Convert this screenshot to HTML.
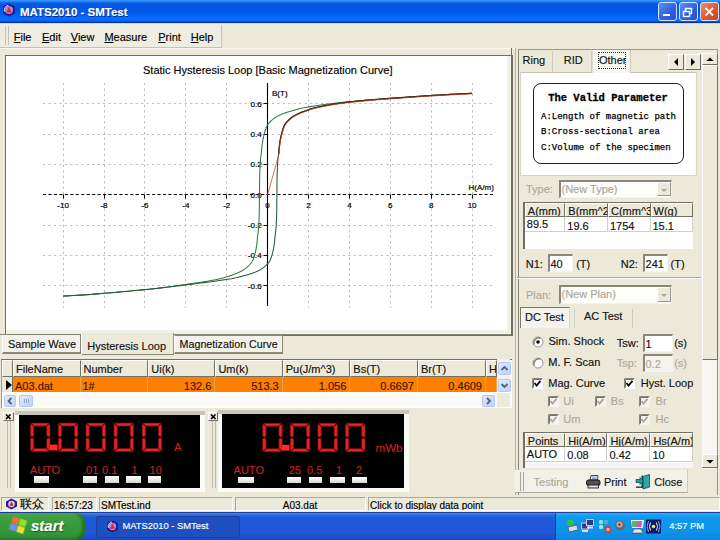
<!DOCTYPE html>
<html><head><meta charset="utf-8"><style>
html,body{margin:0;padding:0;width:720px;height:540px;overflow:hidden;background:#ECE9D8;font-family:'Liberation Sans', sans-serif;}
u{text-decoration:underline;}
div{-webkit-text-stroke:0.15px currentColor;}
</style></head><body>
<div style="position:absolute;left:0px;top:0px;width:720px;height:23px;background:linear-gradient(#3d9bff 0px,#2a80f8 1.5px,#0860e4 3px,#0055e2 6px,#0057e8 12px,#0061f8 15px,#086cff 18px,#0868f8 21px,#0040b8 22px,#0030a0 23px);"></div><svg style="position:absolute;left:2px;top:3px" width="14" height="14" viewBox="0 0 14 14"><path d="M7,0.6 L12.8,3.6 L12.8,10.4 L7,13.4 L1.2,10.4 L1.2,3.6Z" fill="#1a1890"/><circle cx="7" cy="7" r="4" fill="#b888d8"/><path d="M7,3.8 L9.8,9.4 L4.2,9.4Z" fill="#e02828"/><path d="M2.6,8.5 A4.8,4.8 0 0 1 6.5,2.2" fill="none" stroke="#e0e8ff" stroke-width="1"/></svg><div style="position:absolute;left:20px;top:5.5px;font-size:11.5px;line-height:13.5px;color:#fff;white-space:nowrap;font-weight:bold;text-shadow:1px 1px 0 #0a2a8a;">MATS2010 - SMTest</div><div style="position:absolute;left:658px;top:2px;width:19px;height:19px;box-sizing:border-box;border:1px solid #d8e4fc;border-radius:3px;background:linear-gradient(135deg,#5a90f4,#2a5fe0 60%,#2256d6);"><div style="position:absolute;left:3.5px;top:10.5px;width:7px;height:2.5px;background:#fff"></div></div><div style="position:absolute;left:679px;top:2px;width:19px;height:19px;box-sizing:border-box;border:1px solid #d8e4fc;border-radius:3px;background:linear-gradient(135deg,#5a90f4,#2a5fe0 60%,#2256d6);"><svg width="17" height="17" style="position:absolute;left:0;top:0"><path d="M5.5,8 V5.5 H11.5 V10.5 H9.5" fill="none" stroke="#fff" stroke-width="1.4"/><rect x="3.5" y="8.5" width="6" height="5" fill="none" stroke="#fff" stroke-width="1.4"/></svg></div><div style="position:absolute;left:700px;top:2px;width:19px;height:19px;box-sizing:border-box;border:1px solid #d8e4fc;border-radius:3px;background:linear-gradient(135deg,#f09070,#e05530 55%,#c84420);"><svg width="17" height="17" style="position:absolute;left:0;top:0"><path d="M4.5,5 L12,12.5 M12,5 L4.5,12.5" stroke="#fff" stroke-width="1.8"/></svg></div><div style="position:absolute;left:0px;top:23px;width:720px;height:25px;background:#ECE9D8;"></div><div style="position:absolute;left:0px;top:23px;width:720px;height:1px;background:#d0d6f0;"></div><div style="position:absolute;left:0px;top:24px;width:222px;height:23px;background:#efede2;"></div><div style="position:absolute;left:0px;top:47px;width:222px;height:1px;background:#c5c2b2;"></div><div style="position:absolute;left:0px;top:48px;width:720px;height:1px;background:#fbfaf4;"></div><div style="position:absolute;left:5px;top:26px;width:1px;height:19px;background:#c5c2b2;"></div><div style="position:absolute;left:8px;top:26px;width:1px;height:19px;background:#c5c2b2;"></div><div style="position:absolute;left:221px;top:25px;width:1px;height:22px;background:#c5c2b2;"></div><div style="position:absolute;left:13.75px;top:30.5px;font-size:11px;line-height:13px;color:#000;white-space:nowrap;"><u>F</u>ile</div><div style="position:absolute;left:42px;top:30.5px;font-size:11px;line-height:13px;color:#000;white-space:nowrap;"><u>E</u>dit</div><div style="position:absolute;left:70.75px;top:30.5px;font-size:11px;line-height:13px;color:#000;white-space:nowrap;"><u>V</u>iew</div><div style="position:absolute;left:104.4px;top:30.5px;font-size:11px;line-height:13px;color:#000;white-space:nowrap;"><u>M</u>easure</div><div style="position:absolute;left:158.2px;top:30.5px;font-size:11px;line-height:13px;color:#000;white-space:nowrap;"><u>P</u>rint</div><div style="position:absolute;left:190.7px;top:30.5px;font-size:11px;line-height:13px;color:#000;white-space:nowrap;"><u>H</u>elp</div><div style="position:absolute;left:5px;top:55px;width:508px;height:281px;background:#f2f1e8;box-sizing:border-box;border-left:1px solid #716f64;border-top:1px solid #716f64;border-right:1px solid #716f64;border-bottom:1px solid #716f64;"></div><div style="position:absolute;left:6px;top:56px;width:501px;height:274px;background:#fff;"></div><div style="position:absolute;left:143px;top:64px;font-size:11px;line-height:13px;color:#000;white-space:nowrap;">Static Hysteresis Loop [Basic Magnetization Curve]</div><svg style="position:absolute;left:0;top:0" width="720" height="540"><g stroke="#bcbcbc" stroke-width="1" stroke-dasharray="2.2,3.25"><line x1="43" y1="103.5" x2="494" y2="103.5"/><line x1="43" y1="134.5" x2="494" y2="134.5"/><line x1="43" y1="164.5" x2="494" y2="164.5"/><line x1="43" y1="225.5" x2="494" y2="225.5"/><line x1="43" y1="255.5" x2="494" y2="255.5"/><line x1="43" y1="285.5" x2="494" y2="285.5"/><line x1="63.5" y1="83" x2="63.5" y2="308"/><line x1="104.5" y1="83" x2="104.5" y2="308"/><line x1="144.5" y1="83" x2="144.5" y2="308"/><line x1="185.5" y1="83" x2="185.5" y2="308"/><line x1="226.5" y1="83" x2="226.5" y2="308"/><line x1="308.5" y1="83" x2="308.5" y2="308"/><line x1="349.5" y1="83" x2="349.5" y2="308"/><line x1="390.5" y1="83" x2="390.5" y2="308"/><line x1="431.5" y1="83" x2="431.5" y2="308"/><line x1="472.5" y1="83" x2="472.5" y2="308"/></g><line x1="43" y1="194.5" x2="494" y2="194.5" stroke="#000" stroke-width="1.15" stroke-dasharray="3.2,2.25"/><line x1="267.5" y1="83" x2="267.5" y2="306" stroke="#000" stroke-width="1.1"/><g stroke="#000" stroke-width="1"><line x1="63.5" y1="194.5" x2="63.5" y2="198.5"/><line x1="104.5" y1="194.5" x2="104.5" y2="198.5"/><line x1="144.5" y1="194.5" x2="144.5" y2="198.5"/><line x1="185.5" y1="194.5" x2="185.5" y2="198.5"/><line x1="226.5" y1="194.5" x2="226.5" y2="198.5"/><line x1="308.5" y1="194.5" x2="308.5" y2="198.5"/><line x1="349.5" y1="194.5" x2="349.5" y2="198.5"/><line x1="390.5" y1="194.5" x2="390.5" y2="198.5"/><line x1="431.5" y1="194.5" x2="431.5" y2="198.5"/><line x1="472.5" y1="194.5" x2="472.5" y2="198.5"/><line x1="263.5" y1="103.5" x2="267.5" y2="103.5"/><line x1="263.5" y1="134.5" x2="267.5" y2="134.5"/><line x1="263.5" y1="164.5" x2="267.5" y2="164.5"/><line x1="263.5" y1="225.5" x2="267.5" y2="225.5"/><line x1="263.5" y1="255.5" x2="267.5" y2="255.5"/><line x1="263.5" y1="285.5" x2="267.5" y2="285.5"/></g><g font-family="Liberation Sans" font-size="8" fill="#000" stroke="#000" stroke-width="0.2"><text x="63.1" y="207.5" text-anchor="middle">-10</text><text x="104.0" y="207.5" text-anchor="middle">-8</text><text x="144.9" y="207.5" text-anchor="middle">-6</text><text x="185.8" y="207.5" text-anchor="middle">-4</text><text x="226.7" y="207.5" text-anchor="middle">-2</text><text x="267.6" y="207.5" text-anchor="middle">0</text><text x="308.5" y="207.5" text-anchor="middle">2</text><text x="349.4" y="207.5" text-anchor="middle">4</text><text x="390.3" y="207.5" text-anchor="middle">6</text><text x="431.2" y="207.5" text-anchor="middle">8</text><text x="472.1" y="207.5" text-anchor="middle">10</text><text x="261.6" y="106.8" text-anchor="end">0.6</text><text x="261.6" y="137.1" text-anchor="end">0.4</text><text x="261.6" y="167.4" text-anchor="end">0.2</text><text x="261.6" y="197.7" text-anchor="end">0.0</text><text x="261.6" y="228.0" text-anchor="end">-0.2</text><text x="261.6" y="258.3" text-anchor="end">-0.4</text><text x="261.6" y="288.6" text-anchor="end">-0.6</text><text x="272" y="96">B(T)</text><text x="468.5" y="190">H(A/m)</text></g><path d="M63.10,296.05 L66.54,295.89 L69.97,295.72 L73.41,295.53 L76.85,295.33 L80.28,295.12 L83.72,294.89 L87.16,294.65 L90.60,294.40 L94.03,294.14 L97.47,293.88 L100.91,293.60 L104.34,293.31 L107.78,293.02 L111.22,292.72 L114.65,292.42 L118.09,292.11 L121.53,291.80 L124.97,291.48 L128.40,291.16 L131.84,290.84 L135.28,290.51 L138.71,290.18 L142.15,289.86 L145.59,289.53 L149.02,289.18 L152.46,288.82 L155.90,288.43 L159.34,288.03 L162.77,287.61 L166.21,287.17 L169.65,286.73 L173.08,286.27 L176.52,285.80 L179.96,285.33 L183.39,284.85 L186.83,284.37 L190.27,283.87 L193.71,283.35 L197.14,282.83 L200.58,282.30 L204.02,281.76 L207.45,281.18 L210.89,280.57 L214.33,279.93 L217.76,279.27 L221.20,278.51 L224.64,277.54 L228.07,276.39 L231.51,275.25 L234.95,274.02 L236.93,273.22 L237.08,273.15 L237.23,273.09 L237.39,273.02 L237.54,272.96 L237.69,272.89 L237.85,272.82 L238.00,272.76 L238.16,272.69 L238.31,272.62 L238.39,272.58 L238.46,272.55 L238.62,272.48 L238.77,272.41 L238.92,272.34 L239.08,272.27 L239.23,272.19 L239.39,272.12 L239.54,272.05 L239.69,271.97 L239.85,271.90 L240.00,271.82 L240.15,271.75 L240.31,271.67 L240.46,271.59 L240.62,271.51 L240.77,271.43 L240.92,271.35 L241.08,271.27 L241.23,271.19 L241.38,271.11 L241.54,271.02 L241.69,270.94 L241.82,270.87 L241.85,270.86 L242.00,270.77 L242.15,270.68 L242.31,270.59 L242.46,270.51 L242.61,270.42 L242.77,270.33 L242.92,270.23 L243.08,270.14 L243.23,270.04 L243.38,269.95 L243.54,269.85 L243.69,269.75 L243.84,269.65 L244.00,269.55 L244.15,269.44 L244.31,269.33 L244.46,269.23 L244.61,269.12 L244.77,269.01 L244.92,268.90 L245.07,268.78 L245.23,268.67 L245.26,268.64 L245.38,268.55 L245.54,268.43 L245.69,268.31 L245.84,268.19 L246.00,268.06 L246.15,267.94 L246.30,267.81 L246.46,267.68 L246.61,267.55 L246.77,267.42 L246.92,267.28 L247.07,267.15 L247.23,267.01 L247.38,266.87 L247.53,266.73 L247.69,266.59 L247.84,266.44 L248.00,266.30 L248.15,266.15 L248.30,266.01 L248.46,265.86 L248.61,265.71 L248.70,265.63 L248.76,265.56 L248.92,265.40 L249.07,265.25 L249.23,265.09 L249.38,264.92 L249.53,264.75 L249.69,264.58 L249.84,264.40 L249.99,264.23 L250.15,264.05 L250.30,263.88 L250.46,263.70 L250.61,263.52 L250.76,263.34 L250.92,263.16 L251.07,262.97 L251.22,262.78 L251.38,262.59 L251.53,262.39 L251.69,262.18 L251.84,261.97 L251.99,261.75 L252.13,261.53 L252.15,261.50 L252.30,261.24 L252.45,260.95 L252.61,260.64 L252.76,260.31 L252.92,259.97 L253.07,259.60 L253.22,259.22 L253.38,258.81 L253.53,258.40 L253.68,257.96 L253.84,257.51 L253.99,257.05 L254.15,256.57 L254.30,256.07 L254.45,255.57 L254.61,255.05 L254.76,254.52 L254.91,253.98 L255.07,253.41 L255.22,252.82 L255.38,252.21 L255.53,251.55 L255.57,251.38 L255.68,250.87 L255.84,250.15 L255.99,249.38 L256.14,248.57 L256.30,247.71 L256.45,246.79 L256.61,245.82 L256.76,244.78 L256.91,243.47 L257.07,241.94 L257.22,240.27 L257.38,238.58 L257.53,236.96 L257.68,235.51 L257.84,234.32 L257.99,233.25 L258.14,232.14 L258.30,230.80 L258.45,229.24 L258.61,227.44 L258.76,225.29 L258.91,222.69 L259.01,220.84 L259.07,219.50 L259.22,214.72 L259.37,204.46 L259.53,187.35 L259.68,175.60 L259.84,170.48 L259.99,167.12 L260.14,164.46 L260.30,162.24 L260.45,160.39 L260.60,158.79 L260.76,157.40 L260.91,156.25 L261.07,155.18 L261.22,154.03 L261.37,152.64 L261.53,151.05 L261.68,149.37 L261.83,147.69 L261.99,146.11 L262.14,144.72 L262.30,143.60 L262.44,142.63 L262.45,142.60 L262.60,141.66 L262.76,140.77 L262.91,139.92 L263.06,139.13 L263.22,138.37 L263.37,137.66 L263.53,136.97 L263.68,136.32 L263.83,135.69 L263.99,135.09 L264.14,134.51 L264.29,133.94 L264.45,133.38 L264.60,132.83 L264.76,132.29 L264.91,131.77 L265.06,131.25 L265.22,130.74 L265.37,130.25 L265.52,129.77 L265.68,129.31 L265.83,128.86 L265.88,128.71 L265.99,128.42 L266.14,128.00 L266.29,127.60 L266.45,127.22 L266.60,126.86 L266.75,126.51 L266.91,126.19 L267.06,125.88 L267.22,125.60 L267.37,125.34 L267.52,125.08 L267.68,124.84 L267.83,124.60 L267.98,124.37 L268.14,124.15 L268.29,123.93 L268.45,123.72 L268.60,123.52 L268.75,123.32 L268.91,123.13 L269.06,122.94 L269.21,122.76 L269.32,122.64 L269.37,122.58 L269.52,122.41 L269.68,122.24 L269.83,122.08 L269.98,121.92 L270.14,121.76 L270.29,121.61 L270.44,121.46 L270.60,121.31 L270.75,121.16 L270.91,121.02 L271.06,120.88 L271.21,120.74 L271.37,120.60 L271.52,120.46 L271.67,120.33 L271.83,120.19 L271.98,120.06 L272.14,119.93 L272.29,119.80 L272.44,119.67 L272.60,119.54 L272.75,119.41 L272.76,119.41 L272.90,119.29 L273.06,119.16 L273.21,119.04 L273.37,118.92 L273.52,118.80 L273.67,118.68 L273.83,118.57 L273.98,118.46 L274.13,118.34 L274.29,118.23 L274.44,118.12 L274.60,118.01 L274.75,117.91 L274.90,117.80 L275.06,117.70 L275.21,117.60 L275.36,117.50 L275.52,117.40 L275.67,117.30 L275.83,117.20 L275.98,117.11 L276.13,117.01 L276.19,116.98 L276.29,116.92 L276.44,116.83 L276.59,116.74 L276.75,116.65 L276.90,116.57 L277.06,116.48 L277.21,116.39 L277.36,116.31 L277.52,116.23 L277.67,116.15 L277.83,116.07 L277.98,115.99 L278.13,115.91 L278.29,115.83 L278.44,115.75 L278.59,115.68 L278.75,115.60 L278.90,115.53 L279.06,115.45 L279.21,115.38 L279.36,115.30 L279.52,115.23 L279.63,115.18 L279.67,115.16 L279.82,115.09 L279.98,115.02 L280.13,114.95 L280.29,114.88 L280.44,114.81 L280.59,114.74 L280.75,114.68 L280.90,114.61 L281.05,114.55 L281.21,114.48 L281.36,114.41 L281.52,114.35 L281.67,114.29 L281.82,114.22 L281.98,114.16 L282.13,114.10 L282.28,114.04 L282.44,113.98 L282.59,113.91 L282.75,113.85 L282.90,113.79 L283.05,113.74 L283.07,113.73 L283.21,113.68 L283.36,113.62 L283.51,113.56 L283.67,113.50 L283.82,113.44 L283.98,113.39 L284.13,113.33 L284.28,113.27 L284.44,113.22 L284.59,113.16 L284.74,113.11 L284.90,113.05 L285.05,113.00 L285.21,112.94 L285.36,112.89 L285.51,112.83 L285.67,112.78 L285.82,112.73 L285.97,112.67 L286.13,112.62 L286.28,112.57 L286.44,112.51 L286.50,112.49 L286.59,112.46 L286.74,112.41 L286.90,112.36 L287.05,112.31 L287.20,112.26 L287.36,112.21 L287.51,112.16 L287.67,112.11 L287.82,112.06 L287.97,112.01 L288.13,111.96 L288.28,111.91 L288.43,111.87 L288.59,111.82 L288.74,111.77 L288.90,111.73 L289.05,111.68 L289.20,111.64 L289.36,111.59 L289.51,111.55 L289.66,111.50 L289.82,111.46 L289.94,111.42 L289.97,111.41 L290.13,111.37 L290.28,111.33 L290.43,111.28 L290.59,111.24 L290.74,111.20 L290.89,111.15 L291.05,111.11 L291.20,111.07 L291.36,111.03 L291.51,110.98 L291.66,110.94 L291.82,110.90 L291.97,110.86 L292.12,110.81 L292.28,110.77 L292.43,110.73 L292.59,110.69 L292.74,110.64 L292.89,110.60 L293.05,110.56 L293.20,110.52 L293.35,110.47 L293.38,110.47 L293.51,110.43 L293.66,110.39 L293.82,110.34 L293.97,110.30 L294.12,110.26 L294.28,110.21 L294.43,110.17 L294.58,110.13 L294.74,110.08 L294.89,110.04 L295.05,109.99 L295.20,109.95 L295.35,109.91 L295.51,109.86 L295.66,109.82 L295.81,109.77 L295.97,109.73 L296.12,109.69 L296.28,109.64 L296.43,109.60 L296.58,109.55 L296.74,109.51 L296.81,109.49 L296.89,109.47 L297.04,109.42 L297.20,109.38 L297.35,109.34 L297.51,109.29 L297.66,109.25 L297.81,109.21 L297.97,109.17 L298.12,109.12 L298.28,109.08 L300.25,108.56 L303.69,107.80 L307.13,107.17 L310.56,106.61 L314.00,106.08 L317.44,105.56 L320.87,105.05 L324.31,104.56 L327.75,104.10 L331.18,103.67 L334.62,103.25 L338.06,102.86 L341.49,102.48 L344.93,102.12 L348.37,101.79 L351.81,101.46 L355.24,101.15 L358.68,100.84 L362.12,100.54 L365.55,100.25 L368.99,99.96 L372.43,99.68 L375.86,99.41 L379.30,99.15 L382.74,98.89 L386.18,98.63 L389.61,98.38 L393.05,98.14 L396.49,97.89 L399.92,97.65 L403.36,97.41 L406.80,97.17 L410.23,96.93 L413.67,96.70 L417.11,96.47 L420.55,96.24 L423.98,96.01 L427.42,95.79 L430.86,95.58 L434.29,95.36 L437.73,95.15 L441.17,94.95 L444.60,94.75 L448.04,94.55 L451.48,94.36 L454.92,94.18 L458.35,94.00 L461.79,93.83 L465.23,93.66 L468.66,93.50 L472.10,93.35" fill="none" stroke="#2f7a3f" stroke-width="1.05"/><path d="M63.10,296.05 L66.54,295.89 L69.97,295.72 L73.41,295.53 L76.85,295.33 L80.28,295.12 L83.72,294.89 L87.16,294.65 L90.60,294.40 L94.03,294.14 L97.47,293.88 L100.91,293.60 L104.34,293.31 L107.78,293.02 L111.22,292.73 L114.65,292.42 L118.09,292.11 L121.53,291.80 L124.97,291.49 L128.40,291.17 L131.84,290.85 L135.28,290.53 L138.71,290.20 L142.15,289.88 L145.59,289.56 L149.02,289.23 L152.46,288.87 L155.90,288.50 L159.34,288.12 L162.77,287.72 L166.21,287.32 L169.65,286.90 L173.08,286.48 L176.52,286.06 L179.96,285.63 L183.39,285.21 L186.83,284.79 L190.27,284.36 L193.71,283.93 L197.14,283.50 L200.58,283.07 L204.02,282.63 L207.45,282.20 L210.89,281.76 L214.33,281.30 L217.76,280.83 L221.20,280.33 L224.64,279.83 L228.07,279.31 L231.51,278.74 L234.95,278.06 L236.93,277.60 L237.08,277.56 L237.23,277.52 L237.39,277.48 L237.54,277.44 L237.69,277.40 L237.85,277.36 L238.00,277.32 L238.16,277.28 L238.31,277.24 L238.39,277.22 L238.46,277.20 L238.62,277.16 L238.77,277.12 L238.92,277.08 L239.08,277.04 L239.23,277.00 L239.39,276.96 L239.54,276.92 L239.69,276.87 L239.85,276.83 L240.00,276.79 L240.15,276.75 L240.31,276.71 L240.46,276.67 L240.62,276.62 L240.77,276.58 L240.92,276.54 L241.08,276.50 L241.23,276.46 L241.38,276.41 L241.54,276.37 L241.69,276.33 L241.82,276.30 L241.85,276.29 L242.00,276.25 L242.15,276.21 L242.31,276.16 L242.46,276.12 L242.61,276.08 L242.77,276.04 L242.92,276.00 L243.08,275.96 L243.23,275.92 L243.38,275.88 L243.54,275.84 L243.69,275.80 L243.84,275.76 L244.00,275.71 L244.15,275.67 L244.31,275.63 L244.46,275.59 L244.61,275.55 L244.77,275.51 L244.92,275.47 L245.07,275.43 L245.23,275.39 L245.26,275.38 L245.38,275.35 L245.54,275.31 L245.69,275.27 L245.84,275.23 L246.00,275.18 L246.15,275.14 L246.30,275.10 L246.46,275.06 L246.61,275.02 L246.77,274.98 L246.92,274.93 L247.07,274.89 L247.23,274.85 L247.38,274.80 L247.53,274.76 L247.69,274.72 L247.84,274.67 L248.00,274.63 L248.15,274.58 L248.30,274.54 L248.46,274.49 L248.61,274.44 L248.70,274.42 L248.76,274.40 L248.92,274.35 L249.07,274.30 L249.23,274.25 L249.38,274.21 L249.53,274.16 L249.69,274.11 L249.84,274.06 L249.99,274.01 L250.15,273.96 L250.30,273.90 L250.46,273.85 L250.61,273.80 L250.76,273.75 L250.92,273.70 L251.07,273.65 L251.22,273.60 L251.38,273.54 L251.53,273.49 L251.69,273.44 L251.84,273.38 L251.99,273.33 L252.13,273.28 L252.15,273.28 L252.30,273.22 L252.45,273.17 L252.61,273.11 L252.76,273.06 L252.92,273.00 L253.07,272.95 L253.22,272.89 L253.38,272.83 L253.53,272.78 L253.68,272.72 L253.84,272.66 L253.99,272.60 L254.15,272.54 L254.30,272.49 L254.45,272.43 L254.61,272.37 L254.76,272.30 L254.91,272.24 L255.07,272.18 L255.22,272.12 L255.38,272.06 L255.53,271.99 L255.57,271.98 L255.68,271.93 L255.84,271.86 L255.99,271.80 L256.14,271.73 L256.30,271.67 L256.45,271.60 L256.61,271.53 L256.76,271.46 L256.91,271.40 L257.07,271.33 L257.22,271.26 L257.38,271.19 L257.53,271.11 L257.68,271.04 L257.84,270.97 L257.99,270.89 L258.14,270.82 L258.30,270.75 L258.45,270.67 L258.61,270.59 L258.76,270.51 L258.91,270.44 L259.01,270.39 L259.07,270.36 L259.22,270.28 L259.37,270.20 L259.53,270.11 L259.68,270.03 L259.84,269.94 L259.99,269.86 L260.14,269.77 L260.30,269.68 L260.45,269.59 L260.60,269.50 L260.76,269.40 L260.91,269.31 L261.07,269.21 L261.22,269.12 L261.37,269.02 L261.53,268.92 L261.68,268.82 L261.83,268.72 L261.99,268.61 L262.14,268.51 L262.30,268.40 L262.44,268.29 L262.45,268.29 L262.60,268.18 L262.76,268.07 L262.91,267.96 L263.06,267.84 L263.22,267.73 L263.37,267.61 L263.53,267.49 L263.68,267.37 L263.83,267.25 L263.99,267.12 L264.14,267.00 L264.29,266.87 L264.45,266.74 L264.60,266.61 L264.76,266.48 L264.91,266.35 L265.06,266.22 L265.22,266.08 L265.37,265.95 L265.52,265.81 L265.68,265.67 L265.83,265.53 L265.88,265.49 L265.99,265.39 L266.14,265.24 L266.29,265.09 L266.45,264.94 L266.60,264.79 L266.75,264.63 L266.91,264.46 L267.06,264.30 L267.22,264.14 L267.37,263.97 L267.52,263.81 L267.68,263.64 L267.83,263.48 L267.98,263.31 L268.14,263.14 L268.29,262.96 L268.45,262.78 L268.60,262.60 L268.75,262.41 L268.91,262.22 L269.06,262.02 L269.21,261.81 L269.32,261.66 L269.37,261.59 L269.52,261.34 L269.68,261.08 L269.83,260.79 L269.98,260.49 L270.14,260.17 L270.29,259.83 L270.44,259.47 L270.60,259.10 L270.75,258.71 L270.91,258.30 L271.06,257.88 L271.21,257.45 L271.37,257.00 L271.52,256.53 L271.67,256.06 L271.83,255.57 L271.98,255.07 L272.14,254.55 L272.29,254.03 L272.44,253.48 L272.60,252.91 L272.75,252.31 L272.76,252.29 L272.90,251.68 L273.06,251.02 L273.21,250.32 L273.37,249.58 L273.52,248.80 L273.67,247.97 L273.83,247.09 L273.98,246.15 L274.13,245.15 L274.29,243.97 L274.44,242.52 L274.60,240.90 L274.75,239.22 L274.90,237.58 L275.06,236.06 L275.21,234.77 L275.36,233.68 L275.52,232.61 L275.67,231.38 L275.83,229.90 L275.98,228.20 L276.13,226.20 L276.19,225.33 L276.29,223.78 L276.44,220.88 L276.59,216.82 L276.75,209.72 L276.90,193.67 L277.06,178.37 L277.21,171.98 L277.36,168.10 L277.52,165.25 L277.67,162.86 L277.83,160.88 L277.98,159.19 L278.13,157.71 L278.29,156.49 L278.44,155.39 L278.59,154.24 L278.75,152.85 L278.90,151.25 L279.06,149.53 L279.21,147.79 L279.36,146.15 L279.52,144.71 L279.63,143.84 L279.67,143.56 L279.82,142.53 L279.98,141.56 L280.13,140.64 L280.29,139.77 L280.44,138.95 L280.59,138.17 L280.75,137.44 L280.90,136.73 L281.05,136.06 L281.21,135.42 L281.36,134.79 L281.52,134.19 L281.67,133.60 L281.82,133.02 L281.98,132.45 L282.13,131.89 L282.28,131.34 L282.44,130.80 L282.59,130.28 L282.75,129.77 L282.90,129.27 L283.05,128.80 L283.07,128.76 L283.21,128.34 L283.36,127.89 L283.51,127.47 L283.67,127.07 L283.82,126.69 L283.98,126.33 L284.13,125.99 L284.28,125.68 L284.44,125.39 L284.59,125.12 L284.74,124.86 L284.90,124.60 L285.05,124.35 L285.21,124.11 L285.36,123.88 L285.51,123.65 L285.67,123.43 L285.82,123.22 L285.97,123.01 L286.13,122.81 L286.28,122.62 L286.44,122.43 L286.50,122.34 L286.59,122.24 L286.74,122.06 L286.90,121.88 L287.05,121.71 L287.20,121.54 L287.36,121.38 L287.51,121.22 L287.67,121.06 L287.82,120.90 L287.97,120.75 L288.13,120.60 L288.28,120.44 L288.43,120.29 L288.59,120.14 L288.74,119.99 L288.90,119.85 L289.05,119.70 L289.20,119.56 L289.36,119.41 L289.51,119.27 L289.66,119.13 L289.82,119.00 L289.94,118.89 L289.97,118.86 L290.13,118.73 L290.28,118.60 L290.43,118.47 L290.59,118.34 L290.74,118.22 L290.89,118.09 L291.05,117.97 L291.20,117.85 L291.36,117.73 L291.51,117.62 L291.66,117.50 L291.82,117.39 L291.97,117.28 L292.12,117.17 L292.28,117.06 L292.43,116.95 L292.59,116.85 L292.74,116.74 L292.89,116.64 L293.05,116.54 L293.20,116.44 L293.35,116.34 L293.38,116.33 L293.51,116.25 L293.66,116.15 L293.82,116.06 L293.97,115.97 L294.12,115.88 L294.28,115.78 L294.43,115.70 L294.58,115.61 L294.74,115.52 L294.89,115.43 L295.05,115.35 L295.20,115.26 L295.35,115.18 L295.51,115.09 L295.66,115.01 L295.81,114.93 L295.97,114.85 L296.12,114.77 L296.28,114.69 L296.43,114.61 L296.58,114.53 L296.74,114.45 L296.81,114.42 L296.89,114.38 L297.04,114.30 L297.20,114.23 L297.35,114.15 L297.51,114.08 L297.66,114.00 L297.81,113.93 L297.97,113.86 L298.12,113.79 L298.28,113.72 L300.25,112.84 L303.69,111.50 L307.13,110.30 L310.56,109.08 L314.00,108.01 L317.44,107.19 L320.87,106.48 L324.31,105.81 L327.75,105.16 L331.18,104.55 L334.62,103.98 L338.06,103.47 L341.49,102.98 L344.93,102.53 L348.37,102.12 L351.81,101.73 L355.24,101.37 L358.68,101.02 L362.12,100.69 L365.55,100.37 L368.99,100.06 L372.43,99.76 L375.86,99.48 L379.30,99.20 L382.74,98.93 L386.18,98.67 L389.61,98.41 L393.05,98.16 L396.49,97.91 L399.92,97.66 L403.36,97.42 L406.80,97.18 L410.23,96.94 L413.67,96.70 L417.11,96.47 L420.55,96.24 L423.98,96.02 L427.42,95.79 L430.86,95.58 L434.29,95.36 L437.73,95.15 L441.17,94.95 L444.60,94.75 L448.04,94.55 L451.48,94.36 L454.92,94.18 L458.35,94.00 L461.79,93.83 L465.23,93.66 L468.66,93.50 L472.10,93.35" fill="none" stroke="#28583a" stroke-width="1.05"/><path d="M278.64,153.82 L278.64,153.82 L279.29,146.91 L279.94,141.81 L280.58,138.22 L281.23,135.32 L281.88,132.81 L282.53,130.50 L283.17,128.44 L283.82,126.69 L284.47,125.34 L285.11,124.25 L285.76,123.30 L286.41,122.46 L287.05,121.71 L287.70,121.02 L288.35,120.38 L289.00,119.75 L289.64,119.15 L290.29,118.59 L290.94,118.06 L291.58,117.56 L292.23,117.09 L292.88,116.65 L293.52,116.24 L294.17,115.85 L294.82,115.47 L295.47,115.12 L296.11,114.77 L296.76,114.44 L297.41,114.13 L298.05,113.82 L298.70,113.52 L299.35,113.24 L299.99,112.95 L300.64,112.68 L301.29,112.41 L301.94,112.15 L302.58,111.90 L303.23,111.66 L303.88,111.43 L304.52,111.20 L305.17,110.98 L305.82,110.76 L306.46,110.53 L307.11,110.31 L307.76,110.08 L308.41,109.84 L309.05,109.61 L309.70,109.38 L310.35,109.15 L310.99,108.93 L311.64,108.71 L312.29,108.51 L312.93,108.31 L313.58,108.12 L314.23,107.95 L314.88,107.79 L315.52,107.63 L316.17,107.47 L316.82,107.32 L317.46,107.18 L318.11,107.04 L318.76,106.91 L319.40,106.77 L320.05,106.64 L320.70,106.51 L321.35,106.39 L321.99,106.26 L322.64,106.13 L323.29,106.00 L323.93,105.88 L324.58,105.75 L325.23,105.63 L325.87,105.51 L326.52,105.38 L327.17,105.26 L327.82,105.14 L328.46,105.03 L329.11,104.91 L329.76,104.79 L330.40,104.68 L331.05,104.57 L331.70,104.46 L332.35,104.35 L332.99,104.24 L333.64,104.14 L334.29,104.03 L334.93,103.93 L335.58,103.83 L336.23,103.74 L336.87,103.64 L337.52,103.54 L338.17,103.45 L338.82,103.36 L339.46,103.26 L340.11,103.17 L340.76,103.08 L341.40,103.00 L342.05,102.91 L342.70,102.82 L343.34,102.74 L343.99,102.65 L344.64,102.57 L345.29,102.49 L345.93,102.41 L346.58,102.33 L347.23,102.25 L347.87,102.17 L348.52,102.10 L349.17,102.02 L349.81,101.95 L350.46,101.88 L351.11,101.81 L351.76,101.74 L352.40,101.67 L353.05,101.60 L353.70,101.53 L354.34,101.46 L354.99,101.40 L355.64,101.33 L356.28,101.26 L356.93,101.20 L357.58,101.13 L358.23,101.07 L358.87,101.00 L359.52,100.94 L360.17,100.88 L360.81,100.81 L361.46,100.75 L362.11,100.69 L362.75,100.63 L363.40,100.57 L364.05,100.51 L364.70,100.45 L365.34,100.39 L365.99,100.33 L366.64,100.27 L367.28,100.21 L367.93,100.15 L368.58,100.10 L369.22,100.04 L369.87,99.98 L370.52,99.93 L371.17,99.87 L371.81,99.82 L372.46,99.76 L373.11,99.71 L373.75,99.65 L374.40,99.60 L375.05,99.54 L375.70,99.49 L376.34,99.44 L376.99,99.38 L377.64,99.33 L378.28,99.28 L378.93,99.23 L379.58,99.18 L380.22,99.13 L380.87,99.07 L381.52,99.02 L382.17,98.97 L382.81,98.92 L383.46,98.87 L384.11,98.82 L384.75,98.77 L385.40,98.72 L386.05,98.68 L386.69,98.63 L387.34,98.58 L387.99,98.53 L388.64,98.48 L389.28,98.43 L389.93,98.39 L390.58,98.34 L391.22,98.29 L391.87,98.24 L392.52,98.20 L393.16,98.15 L393.81,98.10 L394.46,98.06 L395.11,98.01 L395.75,97.96 L396.40,97.91 L397.05,97.87 L397.69,97.82 L398.34,97.78 L398.99,97.73 L399.63,97.68 L400.28,97.64 L400.93,97.59 L401.58,97.54 L402.22,97.50 L402.87,97.45 L403.52,97.41 L404.16,97.36 L404.81,97.32 L405.46,97.27 L406.10,97.22 L406.75,97.18 L407.40,97.13 L408.05,97.09 L408.69,97.04 L409.34,97.00 L409.99,96.95 L410.63,96.91 L411.28,96.87 L411.93,96.82 L412.57,96.78 L413.22,96.73 L413.87,96.69 L414.52,96.64 L415.16,96.60 L415.81,96.56 L416.46,96.51 L417.10,96.47 L417.75,96.43 L418.40,96.38 L419.04,96.34 L419.69,96.30 L420.34,96.25 L420.99,96.21 L421.63,96.17 L422.28,96.13 L422.93,96.08 L423.57,96.04 L424.22,96.00 L424.87,95.96 L425.52,95.92 L426.16,95.87 L426.81,95.83 L427.46,95.79 L428.10,95.75 L428.75,95.71 L429.40,95.67 L430.04,95.63 L430.69,95.59 L431.34,95.55 L431.99,95.51 L432.63,95.47 L433.28,95.43 L433.93,95.39 L434.57,95.35 L435.22,95.31 L435.87,95.27 L436.51,95.23 L437.16,95.19 L437.81,95.15 L438.46,95.11 L439.10,95.07 L439.75,95.03 L440.40,94.99 L441.04,94.96 L441.69,94.92 L442.34,94.88 L442.98,94.84 L443.63,94.81 L444.28,94.77 L444.93,94.73 L445.57,94.69 L446.22,94.66 L446.87,94.62 L447.51,94.58 L448.16,94.55 L448.81,94.51 L449.45,94.48 L450.10,94.44 L450.75,94.40 L451.40,94.37 L452.04,94.33 L452.69,94.30 L453.34,94.26 L453.98,94.23 L454.63,94.20 L455.28,94.16 L455.92,94.13 L456.57,94.09 L457.22,94.06 L457.87,94.03 L458.51,93.99 L459.16,93.96 L459.81,93.93 L460.45,93.90 L461.10,93.86 L461.75,93.83 L462.39,93.80 L463.04,93.77 L463.69,93.74 L464.34,93.70 L464.98,93.67 L465.63,93.64 L466.28,93.61 L466.92,93.58 L467.57,93.55 L468.22,93.52 L468.86,93.49 L469.51,93.46 L470.16,93.43 L470.81,93.40 L471.45,93.38 L472.10,93.35" fill="none" stroke="#3e2a14" stroke-width="1.3"/><path d="M267.60,194.70 L278.94,154.32 L278.94,154.32 L279.59,147.41 L280.24,142.31 L280.88,138.72 L281.53,135.82 L282.18,133.31 L282.83,131.00 L283.47,128.94 L284.12,127.19 L284.77,125.84 L285.41,124.75 L286.06,123.80 L286.71,122.96 L287.35,122.21 L288.00,121.52 L288.65,120.88 L289.30,120.25 L289.94,119.65 L290.59,119.09 L291.24,118.56 L291.88,118.06 L292.53,117.59 L293.18,117.15 L293.82,116.74 L294.47,116.35 L295.12,115.97 L295.77,115.62 L296.41,115.27 L297.06,114.94 L297.71,114.63 L298.35,114.32 L299.00,114.02 L299.65,113.74 L300.29,113.45 L300.94,113.18 L301.59,112.91 L302.24,112.65 L302.88,112.40 L303.53,112.16 L304.18,111.93 L304.82,111.70 L305.47,111.48 L306.12,111.26 L306.76,111.03 L307.41,110.81 L308.06,110.58 L308.71,110.34 L309.35,110.11 L310.00,109.88 L310.65,109.65 L311.29,109.43 L311.94,109.21 L312.59,109.01 L313.23,108.81 L313.88,108.62 L314.53,108.45 L315.18,108.29 L315.82,108.13 L316.47,107.97 L317.12,107.82 L317.76,107.68 L318.41,107.54 L319.06,107.41 L319.70,107.27 L320.35,107.14 L321.00,107.01 L321.65,106.89 L322.29,106.76 L322.94,106.63 L323.59,106.50 L324.23,106.38 L324.88,106.25 L325.53,106.13 L326.17,106.01 L326.82,105.88 L327.47,105.76 L328.12,105.64 L328.76,105.53 L329.41,105.41 L330.06,105.29 L330.70,105.18 L331.35,105.07 L332.00,104.96 L332.65,104.85 L333.29,104.74 L333.94,104.64 L334.59,104.53 L335.23,104.43 L335.88,104.33 L336.53,104.24 L337.17,104.14 L337.82,104.04 L338.47,103.95 L339.12,103.86 L339.76,103.76 L340.41,103.67 L341.06,103.58 L341.70,103.50 L342.35,103.41 L343.00,103.32 L343.64,103.24 L344.29,103.15 L344.94,103.07 L345.59,102.99 L346.23,102.91 L346.88,102.83 L347.53,102.75 L348.17,102.67 L348.82,102.60 L349.47,102.52 L350.11,102.45 L350.76,102.38 L351.41,102.31 L352.06,102.24 L352.70,102.17 L353.35,102.10 L354.00,102.03 L354.64,101.96 L355.29,101.90 L355.94,101.83 L356.58,101.76 L357.23,101.70 L357.88,101.63 L358.53,101.57 L359.17,101.50 L359.82,101.44 L360.47,101.38 L361.11,101.31 L361.76,101.25 L362.41,101.19 L363.05,101.13 L363.70,101.07 L364.35,101.01 L365.00,100.95 L365.64,100.89 L366.29,100.83 L366.94,100.77 L367.58,100.71 L368.23,100.65 L368.88,100.60 L369.52,100.54 L370.17,100.48 L370.82,100.43 L371.47,100.37 L372.11,100.32 L372.76,100.26 L373.41,100.21 L374.05,100.15 L374.70,100.10 L375.35,100.04 L376.00,99.99 L376.64,99.94 L377.29,99.88 L377.94,99.83 L378.58,99.78 L379.23,99.73 L379.88,99.68 L380.52,99.63 L381.17,99.57 L381.82,99.52 L382.47,99.47 L383.11,99.42 L383.76,99.37 L384.41,99.32 L385.05,99.27 L385.70,99.22 L386.35,99.18 L386.99,99.13 L387.64,99.08 L388.29,99.03 L388.94,98.98 L389.58,98.93 L390.23,98.89 L390.88,98.84 L391.52,98.79 L392.17,98.74 L392.82,98.70 L393.46,98.65 L394.11,98.60 L394.76,98.56 L395.41,98.51 L396.05,98.46 L396.70,98.41 L397.35,98.37 L397.99,98.32 L398.64,98.28 L399.29,98.23 L399.93,98.18 L400.58,98.14 L401.23,98.09 L401.88,98.04 L402.52,98.00 L403.17,97.95 L403.82,97.91 L404.46,97.86 L405.11,97.82 L405.76,97.77 L406.40,97.72 L407.05,97.68 L407.70,97.63 L408.35,97.59 L408.99,97.54 L409.64,97.50 L410.29,97.45 L410.93,97.41 L411.58,97.37 L412.23,97.32 L412.87,97.28 L413.52,97.23 L414.17,97.19 L414.82,97.14 L415.46,97.10 L416.11,97.06 L416.76,97.01 L417.40,96.97 L418.05,96.93 L418.70,96.88 L419.34,96.84 L419.99,96.80 L420.64,96.75 L421.29,96.71 L421.93,96.67 L422.58,96.63 L423.23,96.58 L423.87,96.54 L424.52,96.50 L425.17,96.46 L425.82,96.42 L426.46,96.37 L427.11,96.33 L427.76,96.29 L428.40,96.25 L429.05,96.21 L429.70,96.17 L430.34,96.13 L430.99,96.09 L431.64,96.05 L432.29,96.01 L432.93,95.97 L433.58,95.93 L434.23,95.89 L434.87,95.85 L435.52,95.81 L436.17,95.77 L436.81,95.73 L437.46,95.69 L438.11,95.65 L438.76,95.61 L439.40,95.57 L440.05,95.53 L440.70,95.49 L441.34,95.46 L441.99,95.42 L442.64,95.38 L443.28,95.34 L443.93,95.31 L444.58,95.27 L445.23,95.23 L445.87,95.19 L446.52,95.16 L447.17,95.12 L447.81,95.08 L448.46,95.05 L449.11,95.01 L449.75,94.98 L450.40,94.94 L451.05,94.90 L451.70,94.87 L452.34,94.83 L452.99,94.80 L453.64,94.76 L454.28,94.73 L454.93,94.70 L455.58,94.66 L456.22,94.63 L456.87,94.59 L457.52,94.56 L458.17,94.53 L458.81,94.49 L459.46,94.46 L460.11,94.43 L460.75,94.40 L461.40,94.36 L462.05,94.33 L462.69,94.30 L463.34,94.27 L463.99,94.24 L464.64,94.20 L465.28,94.17 L465.93,94.14 L466.58,94.11 L467.22,94.08 L467.87,94.05 L468.52,94.02 L469.16,93.99 L469.81,93.96 L470.46,93.93 L471.11,93.90 L471.75,93.88 L472.40,93.85" fill="none" stroke="#d83a24" stroke-width="0.75"/></svg><div style="position:absolute;left:0px;top:334px;width:512px;height:1px;background:#8a877a;"></div><div style="position:absolute;left:2px;top:335px;width:79px;height:19px;background:#f3f2ea;box-sizing:border-box;border-bottom:2px solid #8a877a;border-right:1px solid #8a877a;border-left:1px solid #fff;"></div><div style="position:absolute;left:81px;top:333px;width:93px;height:22px;background:#ece9d9;box-sizing:border-box;border-bottom:1px solid #8a877a;border-right:1px solid #9a978a;border-left:1px solid #fff;"></div><div style="position:absolute;left:174px;top:335px;width:109px;height:19px;background:#f3f2ea;box-sizing:border-box;border:1px solid #8a877a;border-bottom-width:2px;border-left-color:#fff;"></div><div style="position:absolute;left:8px;top:338px;font-size:11px;line-height:13px;color:#111;white-space:nowrap;">Sample Wave</div><div style="position:absolute;left:87.2px;top:340px;font-size:11px;line-height:13px;color:#111;white-space:nowrap;">Hysteresis Loop</div><div style="position:absolute;left:179.6px;top:338px;font-size:10.7px;line-height:12.7px;color:#111;white-space:nowrap;">Magnetization Curve</div><div style="position:absolute;left:1px;top:359px;width:511px;height:49px;background:#fff;box-sizing:border-box;border-left:1px solid #9a978a;border-top:1px solid #716f64;"></div><div style="position:absolute;left:2px;top:360px;width:11px;height:17px;background:#ECE9D8;box-sizing:border-box;border-right:1px solid #716f64;border-bottom:1px solid #716f64;border-top:1px solid #fff;border-left:1px solid #fff;overflow:hidden;"><div style="position:absolute;left:2px;top:2px;font-size:11px;line-height:13px;white-space:nowrap;color:#111"></div></div><div style="position:absolute;left:2px;top:377px;width:11px;height:15px;background:#ECE9D8;box-sizing:border-box;border-right:1px solid #716f64;"><svg width="10" height="14" style="position:absolute;left:3px;top:1px"><path d="M1,2 L7,7 L1,12Z" fill="#000"/></svg></div><div style="position:absolute;left:13px;top:360px;width:67.5px;height:17px;background:#ECE9D8;box-sizing:border-box;border-right:1px solid #716f64;border-bottom:1px solid #716f64;border-top:1px solid #fff;border-left:1px solid #fff;overflow:hidden;"><div style="position:absolute;left:2px;top:2px;font-size:11px;line-height:13px;white-space:nowrap;color:#111">FileName</div></div><div style="position:absolute;left:13px;top:377px;width:67.5px;height:15px;background:#ff8000;box-sizing:border-box;border-right:1px solid #e8a050;overflow:hidden;"><div style="position:absolute;left:2px;top:2.5px;font-size:11px;line-height:13px;white-space:nowrap;color:#3a1800">A03.dat</div></div><div style="position:absolute;left:80.5px;top:360px;width:67.80000000000001px;height:17px;background:#ECE9D8;box-sizing:border-box;border-right:1px solid #716f64;border-bottom:1px solid #716f64;border-top:1px solid #fff;border-left:1px solid #fff;overflow:hidden;"><div style="position:absolute;left:2px;top:2px;font-size:11px;line-height:13px;white-space:nowrap;color:#111">Number</div></div><div style="position:absolute;left:80.5px;top:377px;width:67.80000000000001px;height:15px;background:#ff8000;box-sizing:border-box;border-right:1px solid #e8a050;overflow:hidden;"><div style="position:absolute;left:2px;top:2.5px;font-size:11px;line-height:13px;white-space:nowrap;color:#3a1800">1#</div></div><div style="position:absolute;left:148.3px;top:360px;width:67.1px;height:17px;background:#ECE9D8;box-sizing:border-box;border-right:1px solid #716f64;border-bottom:1px solid #716f64;border-top:1px solid #fff;border-left:1px solid #fff;overflow:hidden;"><div style="position:absolute;left:2px;top:2px;font-size:11px;line-height:13px;white-space:nowrap;color:#111">Ui(k)</div></div><div style="position:absolute;left:148.3px;top:377px;width:67.1px;height:15px;background:#ff8000;box-sizing:border-box;border-right:1px solid #e8a050;overflow:hidden;"><div style="position:absolute;right:3px;top:2.5px;font-size:11px;line-height:13px;white-space:nowrap;color:#3a1800">132.6</div></div><div style="position:absolute;left:215.4px;top:360px;width:67.29999999999998px;height:17px;background:#ECE9D8;box-sizing:border-box;border-right:1px solid #716f64;border-bottom:1px solid #716f64;border-top:1px solid #fff;border-left:1px solid #fff;overflow:hidden;"><div style="position:absolute;left:2px;top:2px;font-size:11px;line-height:13px;white-space:nowrap;color:#111">Um(k)</div></div><div style="position:absolute;left:215.4px;top:377px;width:67.29999999999998px;height:15px;background:#ff8000;box-sizing:border-box;border-right:1px solid #e8a050;overflow:hidden;"><div style="position:absolute;right:3px;top:2.5px;font-size:11px;line-height:13px;white-space:nowrap;color:#3a1800">513.3</div></div><div style="position:absolute;left:282.7px;top:360px;width:67.60000000000002px;height:17px;background:#ECE9D8;box-sizing:border-box;border-right:1px solid #716f64;border-bottom:1px solid #716f64;border-top:1px solid #fff;border-left:1px solid #fff;overflow:hidden;"><div style="position:absolute;left:2px;top:2px;font-size:11px;line-height:13px;white-space:nowrap;color:#111">Pu(J/m^3)</div></div><div style="position:absolute;left:282.7px;top:377px;width:67.60000000000002px;height:15px;background:#ff8000;box-sizing:border-box;border-right:1px solid #e8a050;overflow:hidden;"><div style="position:absolute;right:3px;top:2.5px;font-size:11px;line-height:13px;white-space:nowrap;color:#3a1800">1.056</div></div><div style="position:absolute;left:350.3px;top:360px;width:67.69999999999999px;height:17px;background:#ECE9D8;box-sizing:border-box;border-right:1px solid #716f64;border-bottom:1px solid #716f64;border-top:1px solid #fff;border-left:1px solid #fff;overflow:hidden;"><div style="position:absolute;left:2px;top:2px;font-size:11px;line-height:13px;white-space:nowrap;color:#111">Bs(T)</div></div><div style="position:absolute;left:350.3px;top:377px;width:67.69999999999999px;height:15px;background:#ff8000;box-sizing:border-box;border-right:1px solid #e8a050;overflow:hidden;"><div style="position:absolute;right:3px;top:2.5px;font-size:11px;line-height:13px;white-space:nowrap;color:#3a1800">0.6697</div></div><div style="position:absolute;left:418px;top:360px;width:68px;height:17px;background:#ECE9D8;box-sizing:border-box;border-right:1px solid #716f64;border-bottom:1px solid #716f64;border-top:1px solid #fff;border-left:1px solid #fff;overflow:hidden;"><div style="position:absolute;left:2px;top:2px;font-size:11px;line-height:13px;white-space:nowrap;color:#111">Br(T)</div></div><div style="position:absolute;left:418px;top:377px;width:68px;height:15px;background:#ff8000;box-sizing:border-box;border-right:1px solid #e8a050;overflow:hidden;"><div style="position:absolute;right:3px;top:2.5px;font-size:11px;line-height:13px;white-space:nowrap;color:#3a1800">0.4609</div></div><div style="position:absolute;left:486px;top:360px;width:11px;height:17px;background:#ECE9D8;box-sizing:border-box;border-right:1px solid #716f64;border-bottom:1px solid #716f64;border-top:1px solid #fff;border-left:1px solid #fff;overflow:hidden;"><div style="position:absolute;left:2px;top:2px;font-size:11px;line-height:13px;white-space:nowrap;color:#111">H</div></div><div style="position:absolute;left:486px;top:377px;width:11px;height:15px;background:#ff8000;box-sizing:border-box;border-right:1px solid #e8a050;overflow:hidden;"><div style="position:absolute;right:3px;top:2.5px;font-size:11px;line-height:13px;white-space:nowrap;color:#3a1800"></div></div><div style="position:absolute;left:497px;top:359px;width:13px;height:33px;background:#f2f1ea;"></div><div style="position:absolute;left:497.5px;top:361.5px;width:13px;height:13px;box-sizing:border-box;border:1px solid #b4c8f6;border-radius:2px;background:linear-gradient(135deg,#e2ebfd,#bcd0f8);"><svg width="11" height="11" style="position:absolute;left:0;top:0"><path d="M2.5,7 L5.5,4 L8.5,7" fill="none" stroke="#4d6185" stroke-width="1.8"/></svg></div><div style="position:absolute;left:497.5px;top:379px;width:13px;height:13px;box-sizing:border-box;border:1px solid #b4c8f6;border-radius:2px;background:linear-gradient(135deg,#e2ebfd,#bcd0f8);"><svg width="11" height="11" style="position:absolute;left:0;top:0"><path d="M2.5,4 L5.5,7 L8.5,4" fill="none" stroke="#4d6185" stroke-width="1.8"/></svg></div><div style="position:absolute;left:2px;top:393px;width:495px;height:14px;background:#fbfbf8;"></div><div style="position:absolute;left:3.5px;top:394.5px;width:12px;height:12px;box-sizing:border-box;border:1px solid #b4c8f6;border-radius:2px;background:linear-gradient(135deg,#e2ebfd,#bcd0f8);"><svg width="10" height="10" style="position:absolute;left:0;top:0"><path d="M6.5,2 L3.5,5 L6.5,8" fill="none" stroke="#4d6185" stroke-width="1.8"/></svg></div><div style="position:absolute;left:18.5px;top:394.5px;width:14px;height:12px;box-sizing:border-box;border:1px solid #b4c8f6;border-radius:2px;background:linear-gradient(135deg,#e2ebfd,#bcd0f8);"><svg width="12" height="10" style="position:absolute;left:0;top:0"><path d="M4.5,3 V7 M6.5,3 V7 M8.5,3 V7" stroke="#8ea6d8" stroke-width="1"/></svg></div><div style="position:absolute;left:482px;top:394.5px;width:13px;height:12px;box-sizing:border-box;border:1px solid #b4c8f6;border-radius:2px;background:linear-gradient(135deg,#e2ebfd,#bcd0f8);"><svg width="11" height="10" style="position:absolute;left:0;top:0"><path d="M4,2 L7,5 L4,8" fill="none" stroke="#4d6185" stroke-width="1.8"/></svg></div><div style="position:absolute;left:497px;top:393px;width:13px;height:14px;background:#ECE9D8;"></div><div style="position:absolute;left:3px;top:412px;width:10.5px;height:9px;background:#ECE9D8;box-sizing:border-box;border:1px solid;border-color:#fff #716f64 #716f64 #fff;"><svg width="9" height="8" style="position:absolute;left:0;top:0"><path d="M2,1.5 L6.5,6 M6.5,1.5 L2,6" stroke="#000" stroke-width="1.6"/></svg></div><div style="position:absolute;left:7px;top:421px;width:1px;height:67px;background:#bdbaa8;"></div><div style="position:absolute;left:10px;top:421px;width:1px;height:67px;background:#bdbaa8;"></div><div style="position:absolute;left:15px;top:411px;width:190px;height:81px;background:#fbfbf5;"></div><div style="position:absolute;left:15px;top:411px;width:190px;height:4px;background:#c8c6bb;"></div><div style="position:absolute;left:19px;top:415px;width:181px;height:73px;background:#000;"></div><svg style="position:absolute;left:0;top:0" width="720" height="540"><path d="M31.4,423.1 L49.1,423.1 L46.5,426.1 L34.0,426.1Z M34.0,448.5 L46.5,448.5 L49.1,451.5 L31.4,451.5Z M30.5,423.7 L33.8,426.3 L33.8,435.5 L32.15,436.7 L30.5,436.1Z M30.5,438.5 L32.15,437.90000000000003 L33.8,439.1 L33.8,448.3 L30.5,450.90000000000003Z M50.0,423.7 L46.7,426.3 L46.7,435.5 L48.35,436.7 L50.0,436.1Z M50.0,438.5 L48.35,437.90000000000003 L46.7,439.1 L46.7,448.3 L50.0,450.90000000000003Z" fill="#e82222" stroke="#7a1010" stroke-width="0.7" stroke-linejoin="round"/><path d="M59.199999999999996,423.1 L76.89999999999999,423.1 L74.3,426.1 L61.8,426.1Z M61.8,448.5 L74.3,448.5 L76.89999999999999,451.5 L59.199999999999996,451.5Z M58.3,423.7 L61.599999999999994,426.3 L61.599999999999994,435.5 L59.949999999999996,436.7 L58.3,436.1Z M58.3,438.5 L59.949999999999996,437.90000000000003 L61.599999999999994,439.1 L61.599999999999994,448.3 L58.3,450.90000000000003Z M77.8,423.7 L74.5,426.3 L74.5,435.5 L76.15,436.7 L77.8,436.1Z M77.8,438.5 L76.15,437.90000000000003 L74.5,439.1 L74.5,448.3 L77.8,450.90000000000003Z" fill="#e82222" stroke="#7a1010" stroke-width="0.7" stroke-linejoin="round"/><path d="M86.9,423.1 L104.6,423.1 L102.0,426.1 L89.5,426.1Z M89.5,448.5 L102.0,448.5 L104.6,451.5 L86.9,451.5Z M86,423.7 L89.3,426.3 L89.3,435.5 L87.65,436.7 L86,436.1Z M86,438.5 L87.65,437.90000000000003 L89.3,439.1 L89.3,448.3 L86,450.90000000000003Z M105.5,423.7 L102.2,426.3 L102.2,435.5 L103.85,436.7 L105.5,436.1Z M105.5,438.5 L103.85,437.90000000000003 L102.2,439.1 L102.2,448.3 L105.5,450.90000000000003Z" fill="#e82222" stroke="#7a1010" stroke-width="0.7" stroke-linejoin="round"/><path d="M114.9,423.1 L132.6,423.1 L130.0,426.1 L117.5,426.1Z M117.5,448.5 L130.0,448.5 L132.6,451.5 L114.9,451.5Z M114,423.7 L117.3,426.3 L117.3,435.5 L115.65,436.7 L114,436.1Z M114,438.5 L115.65,437.90000000000003 L117.3,439.1 L117.3,448.3 L114,450.90000000000003Z M133.5,423.7 L130.2,426.3 L130.2,435.5 L131.85,436.7 L133.5,436.1Z M133.5,438.5 L131.85,437.90000000000003 L130.2,439.1 L130.2,448.3 L133.5,450.90000000000003Z" fill="#e82222" stroke="#7a1010" stroke-width="0.7" stroke-linejoin="round"/><path d="M143.1,423.1 L160.79999999999998,423.1 L158.2,426.1 L145.7,426.1Z M145.7,448.5 L158.2,448.5 L160.79999999999998,451.5 L143.1,451.5Z M142.2,423.7 L145.5,426.3 L145.5,435.5 L143.85,436.7 L142.2,436.1Z M142.2,438.5 L143.85,437.90000000000003 L145.5,439.1 L145.5,448.3 L142.2,450.90000000000003Z M161.7,423.7 L158.39999999999998,426.3 L158.39999999999998,435.5 L160.04999999999998,436.7 L161.7,436.1Z M161.7,438.5 L160.04999999999998,437.90000000000003 L158.39999999999998,439.1 L158.39999999999998,448.3 L161.7,450.90000000000003Z" fill="#e82222" stroke="#7a1010" stroke-width="0.7" stroke-linejoin="round"/><rect x="50" y="444.6" width="7.5" height="5.8" fill="#ff2a2a"/></svg><div style="position:absolute;left:174px;top:441px;font-size:11.5px;line-height:13.5px;color:#c82020;white-space:nowrap;">A</div><div style="position:absolute;left:29.8px;top:463.5px;font-size:11px;line-height:13px;color:#c02020;white-space:nowrap;">AUTO</div><div style="position:absolute;left:83px;top:463.5px;font-size:11px;line-height:13px;color:#c02020;white-space:nowrap;">.01</div><div style="position:absolute;left:102px;top:463.5px;font-size:11px;line-height:13px;color:#c02020;white-space:nowrap;">0.1</div><div style="position:absolute;left:131.6px;top:463.5px;font-size:11px;line-height:13px;color:#c02020;white-space:nowrap;">1</div><div style="position:absolute;left:149.6px;top:463.5px;font-size:11px;line-height:13px;color:#c02020;white-space:nowrap;">10</div><div style="position:absolute;left:34.3px;top:476.3px;width:14.4px;height:7.2px;background:linear-gradient(#fff,#d8d8d0);"></div><div style="position:absolute;left:83px;top:476.3px;width:13.6px;height:7.2px;background:linear-gradient(#fff,#d8d8d0);"></div><div style="position:absolute;left:104.7px;top:476.3px;width:14.4px;height:7.2px;background:linear-gradient(#fff,#d8d8d0);"></div><div style="position:absolute;left:126.2px;top:476.3px;width:14.4px;height:7.2px;background:linear-gradient(#fff,#d8d8d0);"></div><div style="position:absolute;left:147.8px;top:476.3px;width:13.6px;height:7.2px;background:linear-gradient(#fff,#d8d8d0);"></div><div style="position:absolute;left:207.5px;top:412px;width:10.5px;height:9px;background:#ECE9D8;box-sizing:border-box;border:1px solid;border-color:#fff #716f64 #716f64 #fff;"><svg width="9" height="8" style="position:absolute;left:0;top:0"><path d="M2,1.5 L6.5,6 M6.5,1.5 L2,6" stroke="#000" stroke-width="1.6"/></svg></div><div style="position:absolute;left:212px;top:421px;width:1px;height:67px;background:#bdbaa8;"></div><div style="position:absolute;left:215px;top:421px;width:1px;height:67px;background:#bdbaa8;"></div><div style="position:absolute;left:218px;top:410px;width:191px;height:82px;background:#fbfbf5;"></div><div style="position:absolute;left:218px;top:410px;width:191px;height:4px;background:#c8c6bb;"></div><div style="position:absolute;left:222px;top:414px;width:182px;height:74px;background:#000;"></div><svg style="position:absolute;left:0;top:0" width="720" height="540"><path d="M263.59999999999997,423.3 L281.3,423.3 L278.7,426.3 L266.2,426.3Z M266.2,448.7 L278.7,448.7 L281.3,451.7 L263.59999999999997,451.7Z M262.7,423.9 L266.0,426.5 L266.0,435.7 L264.35,436.9 L262.7,436.3Z M262.7,438.7 L264.35,438.1 L266.0,439.3 L266.0,448.5 L262.7,451.1Z M282.2,423.9 L278.9,426.5 L278.9,435.7 L280.54999999999995,436.9 L282.2,436.3Z M282.2,438.7 L280.54999999999995,438.1 L278.9,439.3 L278.9,448.5 L282.2,451.1Z" fill="#e82222" stroke="#7a1010" stroke-width="0.7" stroke-linejoin="round"/><path d="M291.2,423.3 L308.90000000000003,423.3 L306.3,426.3 L293.8,426.3Z M293.8,448.7 L306.3,448.7 L308.90000000000003,451.7 L291.2,451.7Z M290.3,423.9 L293.6,426.5 L293.6,435.7 L291.95000000000005,436.9 L290.3,436.3Z M290.3,438.7 L291.95000000000005,438.1 L293.6,439.3 L293.6,448.5 L290.3,451.1Z M309.8,423.9 L306.5,426.5 L306.5,435.7 L308.15,436.9 L309.8,436.3Z M309.8,438.7 L308.15,438.1 L306.5,439.3 L306.5,448.5 L309.8,451.1Z" fill="#e82222" stroke="#7a1010" stroke-width="0.7" stroke-linejoin="round"/><path d="M318.79999999999995,423.3 L336.5,423.3 L333.9,426.3 L321.4,426.3Z M321.4,448.7 L333.9,448.7 L336.5,451.7 L318.79999999999995,451.7Z M317.9,423.9 L321.2,426.5 L321.2,435.7 L319.54999999999995,436.9 L317.9,436.3Z M317.9,438.7 L319.54999999999995,438.1 L321.2,439.3 L321.2,448.5 L317.9,451.1Z M337.4,423.9 L334.09999999999997,426.5 L334.09999999999997,435.7 L335.75,436.9 L337.4,436.3Z M337.4,438.7 L335.75,438.1 L334.09999999999997,439.3 L334.09999999999997,448.5 L337.4,451.1Z" fill="#e82222" stroke="#7a1010" stroke-width="0.7" stroke-linejoin="round"/><path d="M346.4,423.3 L364.1,423.3 L361.5,426.3 L349.0,426.3Z M349.0,448.7 L361.5,448.7 L364.1,451.7 L346.4,451.7Z M345.5,423.9 L348.8,426.5 L348.8,435.7 L347.15,436.9 L345.5,436.3Z M345.5,438.7 L347.15,438.1 L348.8,439.3 L348.8,448.5 L345.5,451.1Z M365.0,423.9 L361.7,426.5 L361.7,435.7 L363.35,436.9 L365.0,436.3Z M365.0,438.7 L363.35,438.1 L361.7,439.3 L361.7,448.5 L365.0,451.1Z" fill="#e82222" stroke="#7a1010" stroke-width="0.7" stroke-linejoin="round"/><rect x="282" y="444.8" width="7.5" height="5.8" fill="#ff2a2a"/></svg><div style="position:absolute;left:375.5px;top:441px;font-size:11.6px;line-height:13.6px;color:#c82020;white-space:nowrap;">mWb</div><div style="position:absolute;left:233.6px;top:463.5px;font-size:11px;line-height:13px;color:#c02020;white-space:nowrap;">AUTO</div><div style="position:absolute;left:288.7px;top:463.5px;font-size:11px;line-height:13px;color:#c02020;white-space:nowrap;">25</div><div style="position:absolute;left:307px;top:463.5px;font-size:11px;line-height:13px;color:#c02020;white-space:nowrap;">0.5</div><div style="position:absolute;left:336px;top:463.5px;font-size:11px;line-height:13px;color:#c02020;white-space:nowrap;">1</div><div style="position:absolute;left:356px;top:463.5px;font-size:11px;line-height:13px;color:#c02020;white-space:nowrap;">2</div><div style="position:absolute;left:238px;top:476.5px;width:15.5px;height:6.7px;background:linear-gradient(#fff,#d8d8d0);"></div><div style="position:absolute;left:287px;top:476.5px;width:14px;height:6.7px;background:linear-gradient(#fff,#d8d8d0);"></div><div style="position:absolute;left:308.6px;top:476.5px;width:13.7px;height:6.7px;background:linear-gradient(#fff,#d8d8d0);"></div><div style="position:absolute;left:330px;top:476.5px;width:15.3px;height:6.7px;background:linear-gradient(#fff,#d8d8d0);"></div><div style="position:absolute;left:352px;top:476.5px;width:14.7px;height:6.7px;background:linear-gradient(#fff,#d8d8d0);"></div><div style="position:absolute;left:511px;top:48px;width:1px;height:288px;background:#716f64;"></div><div style="position:absolute;left:515px;top:48px;width:1px;height:447px;background:#b5b2a2;"></div><div style="position:absolute;left:516px;top:48px;width:204px;height:447px;background:#ECE9D8;"></div><div style="position:absolute;left:518px;top:49px;width:1px;height:446px;background:#8a877a;"></div><div style="position:absolute;left:518px;top:49px;width:199px;height:1px;background:#9a978a;"></div><div style="position:absolute;left:716.5px;top:49px;width:1px;height:446px;background:#9a978a;"></div><div style="position:absolute;left:519.5px;top:72px;width:177.5px;height:104px;background:#fbfbf6;box-sizing:border-box;border:1px solid #d8d5c8;border-top:1px solid #c5c2b2;"></div><div style="position:absolute;left:521.5px;top:73px;width:172.5px;height:101.5px;background:#fff;"></div><div style="position:absolute;left:519.5px;top:51px;width:33.799999999999955px;height:21px;background:#ECE9D8;box-sizing:border-box;border-right:1px solid #cfccbc;"></div><div style="position:absolute;left:553.3px;top:51px;width:38.80000000000007px;height:21px;background:#ECE9D8;box-sizing:border-box;border-right:1px solid #cfccbc;"></div><div style="position:absolute;left:592.1px;top:50px;width:39px;height:23px;background:#f8f8f2;box-sizing:border-box;border-right:1px solid #cfccbc;border-left:1px solid #e0ddd0;"></div><div style="position:absolute;left:598.4px;top:52.2px;width:28px;height:17.2px;box-sizing:border-box;border:1px dotted #333;"></div><div style="position:absolute;left:522.6px;top:54px;font-size:11px;line-height:13px;color:#111;white-space:nowrap;">Ring</div><div style="position:absolute;left:563.8px;top:54px;font-size:11px;line-height:13px;color:#111;white-space:nowrap;">RID</div><div style="position:absolute;left:599px;top:54px;width:27px;overflow:hidden;font-size:11px;line-height:13px;white-space:nowrap;color:#111">Other</div><div style="position:absolute;left:668px;top:54px;width:16px;height:16px;box-sizing:border-box;background:#ECE9D8;border:1px solid;border-color:#fff #716f64 #716f64 #fff;"><svg width="15" height="14" style="position:absolute;left:0;top:0"><path d="M9,3 L5,7 L9,11Z" fill="#000"/></svg></div><div style="position:absolute;left:685px;top:54px;width:16px;height:16px;box-sizing:border-box;background:#ECE9D8;border:1px solid;border-color:#fff #716f64 #716f64 #fff;"><svg width="14" height="14" style="position:absolute;left:0;top:0"><path d="M5,3 L9,7 L5,11Z" fill="#000"/></svg></div><div style="position:absolute;left:533px;top:83px;width:150.5px;height:81px;box-sizing:border-box;border:1.3px solid #222;border-radius:8px;background:#fff;"></div><div style="position:absolute;left:533px;top:91.5px;width:150px;text-align:center;font-family:'Liberation Mono', monospace;font-size:10.5px;line-height:13px;font-weight:bold;color:#000;-webkit-text-stroke:0.3px #000;white-space:nowrap">The Valid Parameter</div><div style="position:absolute;left:541px;top:111px;font-family:'Liberation Mono', monospace;font-size:9px;line-height:12px;color:#000;white-space:pre;-webkit-text-stroke:0.25px #000;">A:Length of magnetic path</div><div style="position:absolute;left:541px;top:126px;font-family:'Liberation Mono', monospace;font-size:9px;line-height:12px;color:#000;white-space:pre;-webkit-text-stroke:0.25px #000;">B:Cross-sectional area</div><div style="position:absolute;left:541px;top:141.5px;font-family:'Liberation Mono', monospace;font-size:9px;line-height:12px;color:#000;white-space:pre;-webkit-text-stroke:0.25px #000;">C:Volume of the specimen</div><div style="position:absolute;left:701.5px;top:52.5px;width:15px;height:416px;background:#f7f6f0;"></div><div style="position:absolute;left:701.5px;top:52.5px;width:16px;height:12px;background:#ECE9D8;box-sizing:border-box;border:1px solid;border-color:#fff #716f64 #716f64 #fff;"><svg width="14" height="10" style="position:absolute;left:0;top:0"><path d="M3.5,7 L7,3.5 L10.5,7Z" fill="#000"/></svg></div><div style="position:absolute;left:701.5px;top:64.5px;width:16px;height:295px;background:#ECE9D8;box-sizing:border-box;border:1px solid;border-color:#fff #716f64 #716f64 #fff;"></div><div style="position:absolute;left:701.5px;top:453.5px;width:16px;height:14px;background:#ECE9D8;box-sizing:border-box;border:1px solid;border-color:#fff #716f64 #716f64 #fff;"><svg width="14" height="12" style="position:absolute;left:0;top:0"><path d="M3.5,5 L7,8.5 L10.5,5Z" fill="#000"/></svg></div><div style="position:absolute;left:526px;top:182.5px;font-size:11px;line-height:13px;color:#aca899;white-space:nowrap;">Type:</div><div style="position:absolute;left:558.5px;top:180px;width:113.5px;height:17.5px;background:#fdfdfa;box-sizing:border-box;border:1px solid;border-color:#8a877a #f4f3ee #f4f3ee #8a877a;border-left-width:2px;border-top-width:2px;"></div><div style="position:absolute;left:561.5px;top:182.5px;font-size:11px;line-height:13px;color:#aca899;white-space:nowrap;">(New Type)</div><div style="position:absolute;left:657.0px;top:181.5px;width:14px;height:14.5px;background:#ECE9D8;box-sizing:border-box;border:1px solid;border-color:#fff #9a978a #9a978a #fff;"><svg width="12" height="14" style="position:absolute;left:0;top:0"><path d="M3,6 L9,6 L6,9Z" fill="#aca899"/></svg></div><div style="position:absolute;left:522.8px;top:201.5px;width:170.0px;height:47.80000000000001px;background:#fff;box-sizing:border-box;border-left:2px solid #716f64;"></div><div style="position:absolute;left:522.8px;top:201.5px;width:170.0px;height:1px;background:#716f64;"></div><div style="position:absolute;left:524.8px;top:202.5px;width:40.5px;height:14.300000000000011px;background:#ECE9D8;box-sizing:border-box;border-right:1px solid #716f64;border-bottom:1px solid #716f64;border-left:1px solid #fff;border-top:1px solid #fff;overflow:hidden;"><div style="position:absolute;left:2px;top:1.3px;font-size:11px;line-height:13px;white-space:nowrap;color:#111">A(mm)</div></div><div style="position:absolute;left:524.8px;top:216.8px;width:40.5px;height:15.199999999999989px;background:#fff;box-sizing:border-box;border-right:1px solid #d0d0c8;border-bottom:1px solid #d0d0c8;overflow:hidden;"><div style="position:absolute;left:2px;top:1.2px;font-size:11px;line-height:13px;white-space:nowrap;color:#111">89.5</div></div><div style="position:absolute;left:565.3px;top:202.5px;width:42.700000000000045px;height:14.300000000000011px;background:#ECE9D8;box-sizing:border-box;border-right:1px solid #716f64;border-bottom:1px solid #716f64;border-left:1px solid #fff;border-top:1px solid #fff;overflow:hidden;"><div style="position:absolute;left:2px;top:1.3px;font-size:11px;line-height:13px;white-space:nowrap;color:#111">B(mm^2)</div></div><div style="position:absolute;left:565.3px;top:216.8px;width:42.700000000000045px;height:15.199999999999989px;background:#fff;box-sizing:border-box;border-right:1px solid #d0d0c8;border-bottom:1px solid #d0d0c8;overflow:hidden;"><div style="position:absolute;left:2px;top:2.8px;font-size:11px;line-height:13px;white-space:nowrap;color:#111">19.6</div></div><div style="position:absolute;left:608px;top:202.5px;width:42.5px;height:14.300000000000011px;background:#ECE9D8;box-sizing:border-box;border-right:1px solid #716f64;border-bottom:1px solid #716f64;border-left:1px solid #fff;border-top:1px solid #fff;overflow:hidden;"><div style="position:absolute;left:2px;top:1.3px;font-size:11px;line-height:13px;white-space:nowrap;color:#111">C(mm^3)</div></div><div style="position:absolute;left:608px;top:216.8px;width:42.5px;height:15.199999999999989px;background:#fff;box-sizing:border-box;border-right:1px solid #d0d0c8;border-bottom:1px solid #d0d0c8;overflow:hidden;"><div style="position:absolute;left:2px;top:2.8px;font-size:11px;line-height:13px;white-space:nowrap;color:#111">1754</div></div><div style="position:absolute;left:650.5px;top:202.5px;width:42.299999999999955px;height:14.300000000000011px;background:#ECE9D8;box-sizing:border-box;border-right:1px solid #716f64;border-bottom:1px solid #716f64;border-left:1px solid #fff;border-top:1px solid #fff;overflow:hidden;"><div style="position:absolute;left:2px;top:1.3px;font-size:11px;line-height:13px;white-space:nowrap;color:#111">W(g)</div></div><div style="position:absolute;left:650.5px;top:216.8px;width:42.299999999999955px;height:15.199999999999989px;background:#fff;box-sizing:border-box;border-right:1px solid #d0d0c8;border-bottom:1px solid #d0d0c8;overflow:hidden;"><div style="position:absolute;left:2px;top:2.8px;font-size:11px;line-height:13px;white-space:nowrap;color:#111">15.1</div></div><div style="position:absolute;left:525.7px;top:258px;font-size:11px;line-height:13px;color:#111;white-space:nowrap;">N1:</div><div style="position:absolute;left:547.5px;top:254.2px;width:25.5px;height:17.7px;background:#fff;box-sizing:border-box;border:1px solid;border-color:#8a877a #f4f3ee #f4f3ee #8a877a;border-left-width:2px;border-top-width:2px;"><div style="position:absolute;left:1px;top:1.5px;font-size:11px;line-height:13px;white-space:nowrap;color:#111">40</div></div><div style="position:absolute;left:576.2px;top:258px;font-size:11px;line-height:13px;color:#111;white-space:nowrap;">(T)</div><div style="position:absolute;left:620.8px;top:258px;font-size:11px;line-height:13px;color:#111;white-space:nowrap;">N2:</div><div style="position:absolute;left:642.6px;top:254.2px;width:25px;height:17.7px;background:#fff;box-sizing:border-box;border:1px solid;border-color:#8a877a #f4f3ee #f4f3ee #8a877a;border-left-width:2px;border-top-width:2px;"><div style="position:absolute;left:1px;top:1.5px;font-size:11px;line-height:13px;white-space:nowrap;color:#111">241</div></div><div style="position:absolute;left:670.5px;top:258px;font-size:11px;line-height:13px;color:#111;white-space:nowrap;">(T)</div><div style="position:absolute;left:517px;top:276.5px;width:184px;height:1px;background:#aca899;"></div><div style="position:absolute;left:517px;top:277.5px;width:184px;height:1px;background:#fff;"></div><div style="position:absolute;left:526px;top:288.5px;font-size:11px;line-height:13px;color:#aca899;white-space:nowrap;">Plan:</div><div style="position:absolute;left:558.5px;top:285.3px;width:113.5px;height:18.3px;background:#fdfdfa;box-sizing:border-box;border:1px solid;border-color:#8a877a #f4f3ee #f4f3ee #8a877a;border-left-width:2px;border-top-width:2px;"></div><div style="position:absolute;left:561.5px;top:287.8px;font-size:11px;line-height:13px;color:#aca899;white-space:nowrap;">(New Plan)</div><div style="position:absolute;left:657.0px;top:286.8px;width:14px;height:15.3px;background:#ECE9D8;box-sizing:border-box;border:1px solid;border-color:#fff #9a978a #9a978a #fff;"><svg width="12" height="14" style="position:absolute;left:0;top:0"><path d="M3,6 L9,6 L6,9Z" fill="#aca899"/></svg></div><div style="position:absolute;left:519.5px;top:327px;width:182px;height:140px;background:#ECE9D8;"></div><div style="position:absolute;left:519.5px;top:307px;width:50px;height:21px;background:#f4f3ee;box-sizing:border-box;border-top:1px solid #7a776a;border-left:1px solid #7a776a;border-right:1px solid #d8d5c8;"></div><div style="position:absolute;left:573.7px;top:309px;width:59px;height:19px;background:#ECE9D8;box-sizing:border-box;border-left:1px solid #d8d5c8;border-right:1px solid #cfccbc;"></div><div style="position:absolute;left:525px;top:310.5px;font-size:11px;line-height:13px;color:#111;white-space:nowrap;">DC Test</div><div style="position:absolute;left:584px;top:310px;font-size:11px;line-height:13px;color:#111;white-space:nowrap;">AC Test</div><svg style="position:absolute;left:531.8px;top:335.7px" width="12" height="12"><circle cx="6" cy="6" r="5" fill="#fff" stroke="#9a978a" stroke-width="1"/><path d="M2.2,8.5 A5,5 0 0 1 8.5,2.2" fill="none" stroke="#716f64" stroke-width="1.2"/><circle cx="6" cy="6" r="1.8" fill="#000"/></svg><div style="position:absolute;left:548.5px;top:335px;font-size:11px;line-height:13px;color:#111;white-space:nowrap;">Sim. Shock</div><svg style="position:absolute;left:532.3px;top:356.5px" width="12" height="12"><circle cx="6" cy="6" r="5" fill="#fff" stroke="#9a978a" stroke-width="1"/><path d="M2.2,8.5 A5,5 0 0 1 8.5,2.2" fill="none" stroke="#716f64" stroke-width="1.2"/></svg><div style="position:absolute;left:548.3px;top:356px;font-size:11px;line-height:13px;color:#111;white-space:nowrap;">M. F. Scan</div><div style="position:absolute;left:616.7px;top:337px;font-size:11px;line-height:13px;color:#111;white-space:nowrap;">Tsw:</div><div style="position:absolute;left:642.5px;top:334.2px;width:30px;height:17.5px;background:#fff;box-sizing:border-box;border:1px solid;border-color:#8a877a #f4f3ee #f4f3ee #8a877a;border-left-width:2px;border-top-width:2px;"><div style="position:absolute;left:1px;top:1.5px;font-size:11px;line-height:13px;white-space:nowrap;color:#111">1</div></div><div style="position:absolute;left:674.2px;top:337px;font-size:11px;line-height:13px;color:#111;white-space:nowrap;">(s)</div><div style="position:absolute;left:616.7px;top:356.5px;font-size:11px;line-height:13px;color:#aca899;white-space:nowrap;">Tsp:</div><div style="position:absolute;left:642.5px;top:354.2px;width:30px;height:18.3px;background:#f4f3ee;box-sizing:border-box;border:1px solid;border-color:#8a877a #f4f3ee #f4f3ee #8a877a;border-left-width:2px;border-top-width:2px;"><div style="position:absolute;left:1px;top:1.5px;font-size:11px;line-height:13px;white-space:nowrap;color:#aca899">0.2</div></div><div style="position:absolute;left:674.2px;top:356.5px;font-size:11px;line-height:13px;color:#aca899;white-space:nowrap;">(s)</div><svg style="position:absolute;left:531.7px;top:378px" width="11" height="11"><rect x="0" y="0" width="11" height="11" fill="#fff"/><path d="M0.5,10.5 V0.5 H10.5" fill="none" stroke="#8a877a" stroke-width="1"/><path d="M1.5,9.5 V1.5 H9.5" fill="none" stroke="#716f64" stroke-width="1"/><path d="M2.5,5 L4.5,7.5 L8.5,2.8" fill="none" stroke="#000" stroke-width="1.8"/></svg><div style="position:absolute;left:548.3px;top:376.5px;font-size:11px;line-height:13px;color:#111;white-space:nowrap;">Mag. Curve</div><svg style="position:absolute;left:624px;top:378px" width="11" height="11"><rect x="0" y="0" width="11" height="11" fill="#fff"/><path d="M0.5,10.5 V0.5 H10.5" fill="none" stroke="#8a877a" stroke-width="1"/><path d="M1.5,9.5 V1.5 H9.5" fill="none" stroke="#716f64" stroke-width="1"/><path d="M2.5,5 L4.5,7.5 L8.5,2.8" fill="none" stroke="#000" stroke-width="1.8"/></svg><div style="position:absolute;left:640.7px;top:376.5px;font-size:11px;line-height:13px;color:#111;white-space:nowrap;">Hyst. Loop</div><svg style="position:absolute;left:547.5px;top:396px" width="11" height="11"><rect x="0" y="0" width="11" height="11" fill="#f4f3ee"/><path d="M0.5,10.5 V0.5 H10.5" fill="none" stroke="#8a877a" stroke-width="1"/><path d="M1.5,9.5 V1.5 H9.5" fill="none" stroke="#716f64" stroke-width="1"/><path d="M2.5,5 L4.5,7.5 L8.5,2.8" fill="none" stroke="#aca899" stroke-width="1.8"/></svg><div style="position:absolute;left:563.3px;top:394.5px;font-size:11px;line-height:13px;color:#aca899;white-space:nowrap;">Ui</div><svg style="position:absolute;left:595px;top:396px" width="11" height="11"><rect x="0" y="0" width="11" height="11" fill="#f4f3ee"/><path d="M0.5,10.5 V0.5 H10.5" fill="none" stroke="#8a877a" stroke-width="1"/><path d="M1.5,9.5 V1.5 H9.5" fill="none" stroke="#716f64" stroke-width="1"/><path d="M2.5,5 L4.5,7.5 L8.5,2.8" fill="none" stroke="#aca899" stroke-width="1.8"/></svg><div style="position:absolute;left:610.8px;top:394.5px;font-size:11px;line-height:13px;color:#aca899;white-space:nowrap;">Bs</div><svg style="position:absolute;left:639px;top:396px" width="11" height="11"><rect x="0" y="0" width="11" height="11" fill="#f4f3ee"/><path d="M0.5,10.5 V0.5 H10.5" fill="none" stroke="#8a877a" stroke-width="1"/><path d="M1.5,9.5 V1.5 H9.5" fill="none" stroke="#716f64" stroke-width="1"/><path d="M2.5,5 L4.5,7.5 L8.5,2.8" fill="none" stroke="#aca899" stroke-width="1.8"/></svg><div style="position:absolute;left:655.6px;top:394.5px;font-size:11px;line-height:13px;color:#aca899;white-space:nowrap;">Br</div><svg style="position:absolute;left:547.5px;top:414px" width="11" height="11"><rect x="0" y="0" width="11" height="11" fill="#f4f3ee"/><path d="M0.5,10.5 V0.5 H10.5" fill="none" stroke="#8a877a" stroke-width="1"/><path d="M1.5,9.5 V1.5 H9.5" fill="none" stroke="#716f64" stroke-width="1"/><path d="M2.5,5 L4.5,7.5 L8.5,2.8" fill="none" stroke="#aca899" stroke-width="1.8"/></svg><div style="position:absolute;left:563.3px;top:412.5px;font-size:11px;line-height:13px;color:#aca899;white-space:nowrap;">Um</div><svg style="position:absolute;left:639px;top:414px" width="11" height="11"><rect x="0" y="0" width="11" height="11" fill="#f4f3ee"/><path d="M0.5,10.5 V0.5 H10.5" fill="none" stroke="#8a877a" stroke-width="1"/><path d="M1.5,9.5 V1.5 H9.5" fill="none" stroke="#716f64" stroke-width="1"/><path d="M2.5,5 L4.5,7.5 L8.5,2.8" fill="none" stroke="#aca899" stroke-width="1.8"/></svg><div style="position:absolute;left:655.6px;top:412.5px;font-size:11px;line-height:13px;color:#aca899;white-space:nowrap;">Hc</div><div style="position:absolute;left:522.8px;top:432px;width:170.0px;height:36px;background:#fff;box-sizing:border-box;border-left:2px solid #716f64;"></div><div style="position:absolute;left:522.8px;top:432px;width:170.0px;height:1px;background:#716f64;"></div><div style="position:absolute;left:524.8px;top:433px;width:40.5px;height:13.5px;background:#ECE9D8;box-sizing:border-box;border-right:1px solid #716f64;border-bottom:1px solid #716f64;border-left:1px solid #fff;border-top:1px solid #fff;overflow:hidden;"><div style="position:absolute;left:2px;top:1.3px;font-size:11px;line-height:13px;white-space:nowrap;color:#111">Points</div></div><div style="position:absolute;left:524.8px;top:446.5px;width:40.5px;height:15.5px;background:#fff;box-sizing:border-box;border-right:1px solid #d0d0c8;border-bottom:1px solid #d0d0c8;overflow:hidden;"><div style="position:absolute;left:2px;top:1.2px;font-size:11px;line-height:13px;white-space:nowrap;color:#111">AUTO</div></div><div style="position:absolute;left:565.3px;top:433px;width:42.200000000000045px;height:13.5px;background:#ECE9D8;box-sizing:border-box;border-right:1px solid #716f64;border-bottom:1px solid #716f64;border-left:1px solid #fff;border-top:1px solid #fff;overflow:hidden;"><div style="position:absolute;left:2px;top:1.3px;font-size:11px;line-height:13px;white-space:nowrap;color:#111">Hi(A/m)</div></div><div style="position:absolute;left:565.3px;top:446.5px;width:42.200000000000045px;height:15.5px;background:#fff;box-sizing:border-box;border-right:1px solid #d0d0c8;border-bottom:1px solid #d0d0c8;overflow:hidden;"><div style="position:absolute;left:2px;top:2.8px;font-size:11px;line-height:13px;white-space:nowrap;color:#111">0.08</div></div><div style="position:absolute;left:607.5px;top:433px;width:42.89999999999998px;height:13.5px;background:#ECE9D8;box-sizing:border-box;border-right:1px solid #716f64;border-bottom:1px solid #716f64;border-left:1px solid #fff;border-top:1px solid #fff;overflow:hidden;"><div style="position:absolute;left:2px;top:1.3px;font-size:11px;line-height:13px;white-space:nowrap;color:#111">Hj(A/m)</div></div><div style="position:absolute;left:607.5px;top:446.5px;width:42.89999999999998px;height:15.5px;background:#fff;box-sizing:border-box;border-right:1px solid #d0d0c8;border-bottom:1px solid #d0d0c8;overflow:hidden;"><div style="position:absolute;left:2px;top:2.8px;font-size:11px;line-height:13px;white-space:nowrap;color:#111">0.42</div></div><div style="position:absolute;left:650.4px;top:433px;width:42.39999999999998px;height:13.5px;background:#ECE9D8;box-sizing:border-box;border-right:1px solid #716f64;border-bottom:1px solid #716f64;border-left:1px solid #fff;border-top:1px solid #fff;overflow:hidden;"><div style="position:absolute;left:2px;top:1.3px;font-size:11px;line-height:13px;white-space:nowrap;color:#111">Hs(A/m)</div></div><div style="position:absolute;left:650.4px;top:446.5px;width:42.39999999999998px;height:15.5px;background:#fff;box-sizing:border-box;border-right:1px solid #d0d0c8;border-bottom:1px solid #d0d0c8;overflow:hidden;"><div style="position:absolute;left:2px;top:2.8px;font-size:11px;line-height:13px;white-space:nowrap;color:#111">10</div></div><div style="position:absolute;left:524.8px;top:463px;width:168px;height:5px;background:#f6f6fa;"></div><div style="position:absolute;left:514.9px;top:469.7px;width:173px;height:23px;background:#f2f1e8;box-sizing:border-box;border-bottom:1px solid #aca899;border-right:1px solid #cfccbc;"></div><div style="position:absolute;left:520.4px;top:472px;width:1px;height:19px;background:#aca899;"></div><div style="position:absolute;left:523.2px;top:472px;width:1px;height:19px;background:#aca899;"></div><div style="position:absolute;left:533.6px;top:475.5px;font-size:11px;line-height:13px;color:#aca899;white-space:nowrap;">Testing</div><svg style="position:absolute;left:586px;top:475px" width="15" height="14"><path d="M4,5 L5,0.5 L12,0.5 L11.5,5Z" fill="#e8ecf8" stroke="#333" stroke-width="0.9"/><path d="M6,2 H10.5 M6,3.5 H10.5" stroke="#7080c0" stroke-width="0.7"/><rect x="0.5" y="5" width="13.5" height="5.5" rx="2" fill="#505050" stroke="#111"/><rect x="2" y="10" width="10.5" height="3" fill="#d8d8d8" stroke="#111" stroke-width="0.8"/></svg><div style="position:absolute;left:603.9px;top:475.5px;font-size:11px;line-height:13px;color:#111;white-space:nowrap;">Print</div><svg style="position:absolute;left:635px;top:474px" width="17" height="16"><path d="M8,2.5 L14.5,0.5 L14.5,13 L8,15Z" fill="#30a8a8" stroke="#104850" stroke-width="0.8"/><rect x="6.5" y="1.5" width="1.5" height="12" fill="#104850"/><path d="M1,5.5 L5,5.5 L5,3.5 L8.5,7 L5,10.5 L5,8.5 L1,8.5Z" fill="#28a0a0" stroke="#0a3a40" stroke-width="0.7"/><rect x="1" y="12.5" width="7" height="1.3" fill="#222"/></svg><div style="position:absolute;left:654.3px;top:475.5px;font-size:11px;line-height:13px;color:#111;white-space:nowrap;">Close</div><div style="position:absolute;left:0px;top:495px;width:720px;height:17px;background:#ECE9D8;"></div><div style="position:absolute;left:1px;top:497px;width:48px;height:14px;box-sizing:border-box;border:1px solid;border-color:#aca899 #fff #fff #aca899;overflow:hidden;"><div style="position:absolute;left:1px;right:2px;top:0.8px;text-align:left;font-size:10px;line-height:13px;white-space:nowrap;color:#000"></div></div><svg style="position:absolute;left:5px;top:498px" width="13" height="12"><path d="M6.5,0.5 L12,3.5 L12,8.5 L6.5,11.5 L1,8.5 L1,3.5Z" fill="#2a1aa0"/><circle cx="6.5" cy="6" r="3.3" fill="#f0c0e0"/><path d="M6.5,3.2 L8.5,7.8 L4.5,7.8Z" fill="#d02020"/></svg><div style="position:absolute;left:20px;top:497.5px;font-size:12px;line-height:13px;color:#000;white-space:nowrap">联众</div><div style="position:absolute;left:52px;top:497px;width:45px;height:14px;box-sizing:border-box;border:1px solid;border-color:#aca899 #fff #fff #aca899;overflow:hidden;"><div style="position:absolute;left:1px;right:2px;top:0.8px;text-align:left;font-size:10px;line-height:13px;white-space:nowrap;color:#000">16:57:23</div></div><div style="position:absolute;left:99px;top:497px;width:134px;height:14px;box-sizing:border-box;border:1px solid;border-color:#aca899 #fff #fff #aca899;overflow:hidden;"><div style="position:absolute;left:1px;right:2px;top:0.8px;text-align:left;font-size:10px;line-height:13px;white-space:nowrap;color:#000">SMTest.ind</div></div><div style="position:absolute;left:235px;top:497px;width:131px;height:14px;box-sizing:border-box;border:1px solid;border-color:#aca899 #fff #fff #aca899;overflow:hidden;"><div style="position:absolute;left:1px;right:2px;top:0.8px;text-align:center;font-size:10px;line-height:13px;white-space:nowrap;color:#000">A03.dat</div></div><div style="position:absolute;left:368px;top:497px;width:352px;height:14px;box-sizing:border-box;border:1px solid;border-color:#aca899 #fff #fff #aca899;overflow:hidden;"><div style="position:absolute;left:1px;right:2px;top:0.8px;text-align:left;font-size:10px;line-height:13px;white-space:nowrap;color:#000">Click to display data point</div></div><div style="position:absolute;left:0px;top:512px;width:720px;height:28px;background:linear-gradient(#1c3f9c 0px,#1c3f9c 1px,#3f84ea 1px,#3576e6 2.5px,#2562d8 4px,#1f58d8 7px,#2058d8 20px,#1c50c8 26px,#1845b8 28px);"></div><div style="position:absolute;left:0;top:513px;width:86px;height:27px;border-radius:0 11px 11px 0;background:linear-gradient(#5cb85c 0px,#42a042 3px,#389a38 12px,#33923a 22px,#2a8030 27px);box-shadow:inset -4px 0 3px rgba(0,50,0,0.35);"></div><div style="position:absolute;left:31px;top:517px;font-size:15px;line-height:17px;color:#fff;white-space:nowrap;font-weight:bold;font-style:italic;text-shadow:1px 1px 1px #1a5a1a;">start</div><svg style="position:absolute;left:5px;top:514px" width="24" height="24"><g transform="rotate(18 12.5 11.5)" filter="url(#wb)"><rect x="5.5" y="4" width="7" height="6.5" fill="#f07030"/><rect x="13.3" y="4" width="7" height="6.5" fill="#90e030"/><rect x="5.5" y="11.3" width="7" height="6.5" fill="#7090f0"/><rect x="13.3" y="11.3" width="7" height="6.5" fill="#f0e030"/></g><defs><filter id="wb"><feGaussianBlur stdDeviation="0.5"/></filter></defs></svg><div style="position:absolute;left:95.5px;top:516px;width:144px;height:21.5px;box-sizing:border-box;border-radius:3px;background:#1e4fc0;border:1px solid #1a3f9a;"></div><svg style="position:absolute;left:105.5px;top:520.3px" width="13" height="13" viewBox="0 0 14 14"><path d="M7,0.6 L12.8,3.6 L12.8,10.4 L7,13.4 L1.2,10.4 L1.2,3.6Z" fill="#1a1890"/><circle cx="7" cy="7" r="4" fill="#b888d8"/><path d="M7,3.8 L9.8,9.4 L4.2,9.4Z" fill="#e02828"/><path d="M2.6,8.5 A4.8,4.8 0 0 1 6.5,2.2" fill="none" stroke="#e0e8ff" stroke-width="1"/></svg><div style="position:absolute;left:122.5px;top:520px;font-size:9.4px;line-height:11.4px;color:#fff;white-space:nowrap;">MATS2010 - SMTest</div><div style="position:absolute;left:555px;top:512px;width:165px;height:28px;background:linear-gradient(#1c3f9c 0px,#1c3f9c 1px,#30b0f8 1px,#1aa0f0 3px,#0f98ec 6px,#0e92ea 20px,#0a84e0 28px);border-left:1px solid #1a3a98;"></div><div style="position:absolute;left:669.3px;top:521px;font-size:9.3px;line-height:11.3px;color:#fff;white-space:nowrap;">4:57 PM</div><svg style="position:absolute;left:0;top:0" width="720" height="540"><circle cx="570.5" cy="523" r="3.5" fill="#30c040"/><path d="M568,527 L577,525 L578,530 L569,532Z" fill="#d8dce8" stroke="#404860" stroke-width="0.7"/><rect x="581.5" y="523" width="7" height="6" fill="#303a8a" stroke="#c0c8f0" stroke-width="1"/><rect x="586.5" y="519.5" width="7" height="6" fill="#303a8a" stroke="#c0c8f0" stroke-width="1"/><rect x="582" y="530" width="6" height="2" fill="#e0e0f0"/><rect x="587" y="526.5" width="6" height="2" fill="#e0e0f0"/><circle cx="601" cy="522" r="2.2" fill="#90e0f0"/><circle cx="606" cy="522" r="2.2" fill="#50b0d0"/><circle cx="601" cy="527" r="2.2" fill="#a0f0e0"/><circle cx="608" cy="529.5" r="3.5" fill="#d04030"/><path d="M606.5,528 L609.5,531 M609.5,528 L606.5,531" stroke="#fff" stroke-width="1"/><circle cx="620" cy="525.5" r="5" fill="#606878"/><circle cx="619.5" cy="524.5" r="3" fill="#e0a090"/><circle cx="619.5" cy="524.5" r="1.2" fill="#404050"/><path d="M631,520 L644,520 L643,528 L632,528Z" fill="#f0f0f0"/><path d="M632,521 L642,521 L641.5,527 L632.5,527Z" fill="#c060c0"/><path d="M632,521 L637,521 L636,527 L632.5,527Z" fill="#50c050"/><path d="M634,529 L641,529 L643,533 L632,533Z" fill="#e8e8e8" stroke="#404040" stroke-width="0.6"/><rect x="646" y="519.5" width="15" height="14" fill="#0a1a6a"/><circle cx="653.5" cy="526.5" r="1.8" fill="#f0e040"/><path d="M650.5,522.5 Q648.5,526.5 650.5,530.5 M656.5,522.5 Q658.5,526.5 656.5,530.5" fill="none" stroke="#f0f0ff" stroke-width="1"/><path d="M648.5,521 Q645.8,526.5 648.5,532 M658.5,521 Q661.2,526.5 658.5,532" fill="none" stroke="#c0c8f0" stroke-width="0.8"/></svg>
</body></html>
